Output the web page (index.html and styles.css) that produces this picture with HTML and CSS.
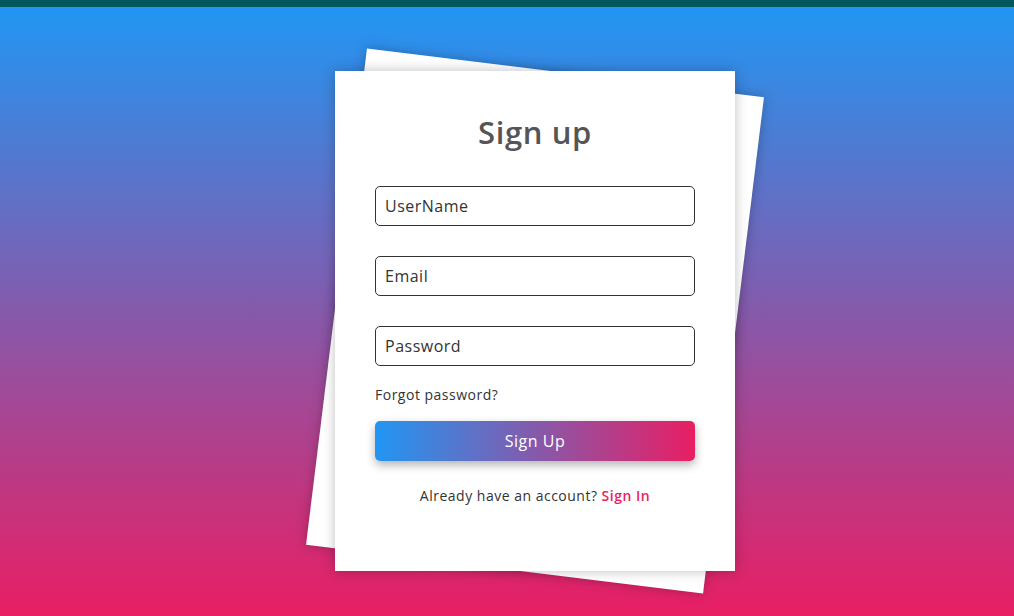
FILE: index.html
```html
<!DOCTYPE html>
<html>
<head>
<meta charset="utf-8">
<link rel="stylesheet" href="styles.css">
</head>
<body>
<div class="topbar"></div>
<main class="stage">
  <div class="card-wrap">
    <form class="card">
      <h1 class="title">Sign up</h1>
      <input class="field" type="text" placeholder="UserName">
      <input class="field" type="email" placeholder="Email">
      <input class="field" type="password" placeholder="Password">
      <a class="forgot" href="#">Forgot password?</a>
      <button class="btn" type="button">Sign Up</button>
      <p class="alt">Already have an account? <a href="#">Sign In</a></p>
    </form>
  </div>
</main>
</body>
</html>
```
FILE: styles.css
```css
* { box-sizing: border-box; }
html, body { margin: 0; padding: 0; }
body {
  font-family: "Open Sans", "Noto Sans", sans-serif;
  color: #333;
  overflow: hidden;
}
.topbar {
  height: 7px;
  background: #03585f;
}
.stage {
  height: 609px;
  background: linear-gradient(to bottom, #2196f3, #e91e63);
  display: flex;
  justify-content: center;
  padding: 64px 0 0 56px;
}
.card-wrap {
  position: relative;
  width: 400px;
  height: 500px;
  z-index: 0;
}
.card-wrap::before {
  content: "";
  position: absolute;
  inset: 0;
  background: #fff;
  transform: rotate(7deg);
  box-shadow: 0 0 12px rgba(0,0,0,0.25);
  z-index: -1;
}
.card {
  width: 400px;
  height: 500px;
  background: #fff;
  box-shadow: 0 0 12px rgba(0,0,0,0.25);
  padding: 37px 40px 40px;
  display: flex;
  flex-direction: column;
}
.title {
  margin: 0 0 30px;
  font-size: 31px;
  line-height: 48px;
  font-weight: 600;
  letter-spacing: 0.6px;
  color: #555;
  text-align: center;
}
.field {
  width: 320px;
  height: 40px;
  border: 1px solid #333;
  border-radius: 5px;
  padding: 0 9px;
  font-family: inherit;
  font-size: 16px;
  letter-spacing: 0.5px;
  color: #333;
  margin-bottom: 30px;
  outline: none;
}
.field::placeholder { color: #333; }
.field:last-of-type { margin-bottom: 19px; }
.forgot {
  font-size: 14px;
  line-height: 20px;
  letter-spacing: 0.5px;
  color: #333;
  text-decoration: none;
  align-self: flex-start;
}
.btn {
  margin-top: 16px;
  width: 320px;
  height: 40px;
  border: none;
  border-radius: 5px;
  background: linear-gradient(to right, #2196f3, #e91e63);
  color: #fff;
  font-family: inherit;
  font-size: 16px;
  font-weight: 500;
  letter-spacing: 0.5px;
  box-shadow: 0 4px 10px rgba(0,0,0,0.3);
}
.alt {
  margin: 25px 0 0;
  text-align: center;
  font-size: 14px;
  line-height: 20px;
  letter-spacing: 0.5px;
  color: #333;
}
.alt a {
  color: #e91e63;
  font-weight: 600;
  text-decoration: none;
}
```
